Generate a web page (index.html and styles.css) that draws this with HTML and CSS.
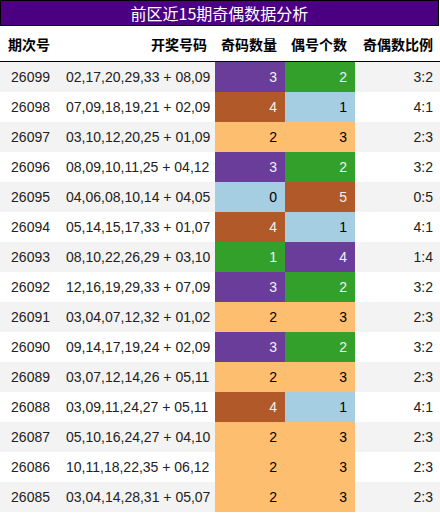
FILE: index.html
```html
<!DOCTYPE html>
<html lang="zh">
<head>
    <meta charset="UTF-8">
    <title>前区近15期奇偶数据分析</title>
    <link rel="stylesheet" href="styles.css">
</head>
<body>
    <div class="caption">前区近15期奇偶数据分析</div>
    <table class="stats">
        <thead>
            <tr>
                <th class="col-issue">期次号</th>
                <th class="col-nums">开奖号码</th>
                <th class="col-odd">奇码数量</th>
                <th class="col-even">偶号个数</th>
                <th class="col-ratio">奇偶数比例</th>
            </tr>
        </thead>
        <tbody>
            <tr><td>26099</td><td>02,17,20,29,33 + 08,09</td><td class="c3">3</td><td class="c2">2</td><td>3:2</td></tr>
            <tr><td>26098</td><td>07,09,18,19,21 + 02,09</td><td class="c4">4</td><td class="c1">1</td><td>4:1</td></tr>
            <tr><td>26097</td><td>03,10,12,20,25 + 01,09</td><td class="cm">2</td><td class="cm">3</td><td>2:3</td></tr>
            <tr><td>26096</td><td>08,09,10,11,25 + 04,12</td><td class="c3">3</td><td class="c2">2</td><td>3:2</td></tr>
            <tr><td>26095</td><td>04,06,08,10,14 + 04,05</td><td class="c1">0</td><td class="c4">5</td><td>0:5</td></tr>
            <tr><td>26094</td><td>05,14,15,17,33 + 01,07</td><td class="c4">4</td><td class="c1">1</td><td>4:1</td></tr>
            <tr><td>26093</td><td>08,10,22,26,29 + 03,10</td><td class="c2">1</td><td class="c3">4</td><td>1:4</td></tr>
            <tr><td>26092</td><td>12,16,19,29,33 + 07,09</td><td class="c3">3</td><td class="c2">2</td><td>3:2</td></tr>
            <tr><td>26091</td><td>03,04,07,12,32 + 01,02</td><td class="cm">2</td><td class="cm">3</td><td>2:3</td></tr>
            <tr><td>26090</td><td>09,14,17,19,24 + 02,09</td><td class="c3">3</td><td class="c2">2</td><td>3:2</td></tr>
            <tr><td>26089</td><td>03,07,12,14,26 + 05,11</td><td class="cm">2</td><td class="cm">3</td><td>2:3</td></tr>
            <tr><td>26088</td><td>03,09,11,24,27 + 05,11</td><td class="c4">4</td><td class="c1">1</td><td>4:1</td></tr>
            <tr><td>26087</td><td>05,10,16,24,27 + 04,10</td><td class="cm">2</td><td class="cm">3</td><td>2:3</td></tr>
            <tr><td>26086</td><td>10,11,18,22,35 + 06,12</td><td class="cm">2</td><td class="cm">3</td><td>2:3</td></tr>
            <tr><td>26085</td><td>03,04,14,28,31 + 05,07</td><td class="cm">2</td><td class="cm">3</td><td>2:3</td></tr>
        </tbody>
    </table>
</body>
</html>
```

FILE: styles.css
```css
body {
    margin: 0;
    padding: 0;
    background: #fff;
    font-family: "Liberation Sans", "Noto Sans CJK SC", sans-serif;
    color: #222;
}

.caption {
    width: 437px;
    height: 24px;
    line-height: 24px;
    border: 1px solid #000;
    background-color: #4b0082;
    color: #fff;
    text-align: center;
    font-size: 16px;
    font-family: "Noto Sans CJK SC", "Liberation Sans", sans-serif;
}

.stats {
    width: 440px;
    border-collapse: collapse;
    table-layout: fixed;
    font-size: 14px;
}

.stats th {
    height: 35px;
    padding: 0 8px 0 0;
    text-align: right;
    font-weight: bold;
    font-family: "Noto Sans CJK SC", sans-serif;
    color: #000;
    white-space: nowrap;
    border-bottom: 1px solid #000;
}

.stats th.col-issue { text-align: left; width: 50px; padding-left: 8px; padding-right: 0; }
.stats th.col-nums { width: 149px; }
.stats th.col-odd { width: 62px; }
.stats th.col-even { width: 62px; }
.stats th.col-ratio { width: 78px; padding-right: 7px; }

.stats td {
    height: 30px;
    padding: 0 8px;
    text-align: right;
    white-space: nowrap;
}

.stats td:last-child {
    padding-right: 7px;
}

.stats tbody tr:nth-child(odd) {
    background-color: #f3f3f3;
}

.c1 { background-color: #a6cee3; color: #000; }
.c2 { background-color: #33a02c; color: #f1f1f1; }
.c3 { background-color: #6a3d9a; color: #f1f1f1; }
.c4 { background-color: #b15928; color: #f1f1f1; }
.cm { background-color: #fdbf6f; color: #000; }
```
